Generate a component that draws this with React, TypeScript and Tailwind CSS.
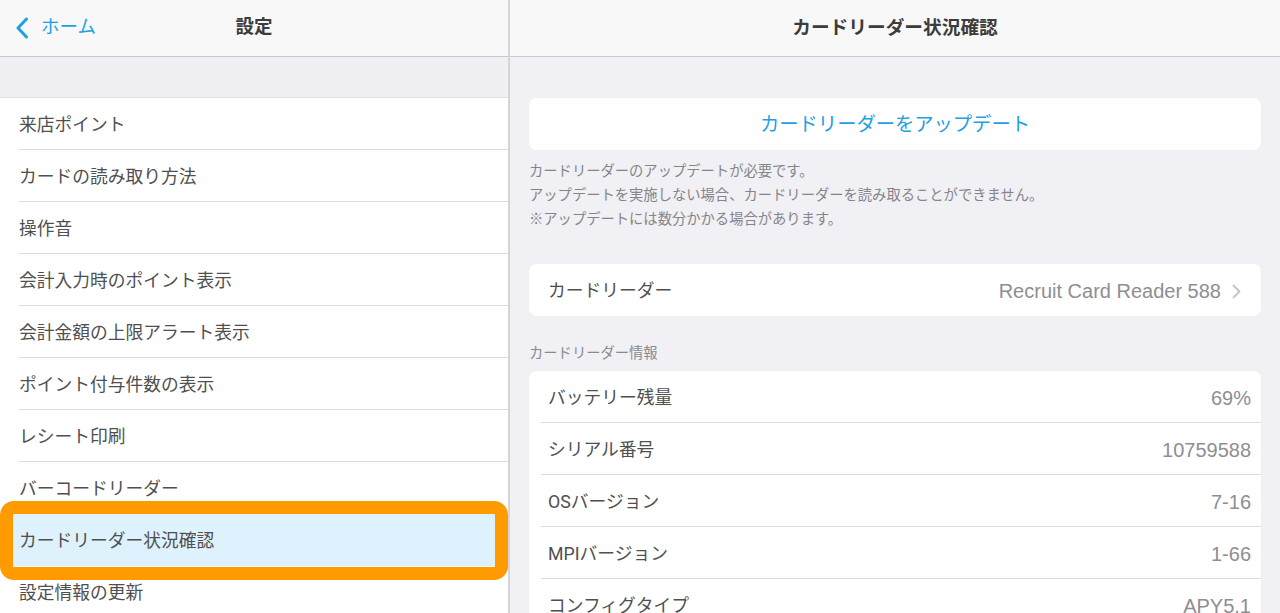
import React from 'react';

const FONT = { fontFamily: 'Roboto, "Noto Sans CJK JP", sans-serif' };
const LATIN = { fontFamily: '"Liberation Sans", "Noto Sans CJK JP", sans-serif' };

const menuItems = [
    '来店ポイント',
    'カードの読み取り方法',
    '操作音',
    '会計入力時のポイント表示',
    '会計金額の上限アラート表示',
    'ポイント付与件数の表示',
    'レシート印刷',
    'バーコードリーダー',
    'カードリーダー状況確認',
    '設定情報の更新',
];

const infoRows = [
    { label: 'バッテリー残量', value: '69%' },
    { label: 'シリアル番号', value: '10759588' },
    { label: 'OSバージョン', value: '7-16' },
    { label: 'MPIバージョン', value: '1-66' },
    { label: 'コンフィグタイプ', value: 'APY5.1' },
];

function BackChevron() {
    return (
        <svg width="14" height="22" viewBox="0 0 14 22" fill="none">
            <path d="M11.5 2 L3 11 L11.5 20" stroke="#1ea0e4" strokeWidth="3" strokeLinecap="round" strokeLinejoin="round" />
        </svg>
    );
}

function RowChevron() {
    return (
        <svg width="9" height="15" viewBox="0 0 9 15" fill="none">
            <path d="M1.5 1.5 L7.5 7.5 L1.5 13.5" stroke="#c4c4c9" strokeWidth="1.8" strokeLinecap="round" strokeLinejoin="round" />
        </svg>
    );
}

export default function App() {
    const selected = 'カードリーダー状況確認';

    return (
        <div className="flex h-[613px] w-[1280px] overflow-hidden bg-white text-[#4f4f4f]" style={FONT}>
            {/* Left: settings menu */}
            <div className="flex w-[510px] shrink-0 flex-col border-r-2 border-[#d4d4d9] bg-white">
                <div className="relative flex h-[57px] shrink-0 items-center justify-center border-b border-[#c8c7cc] bg-[#f8f8f8]">
                    <div className="absolute left-[15px] top-0 flex h-full items-center gap-[12px] pb-[1px]">
                        <BackChevron />
                        <span className="text-[18.5px] text-[#1ea0e4]">ホーム</span>
                    </div>
                    <span className="text-[18.5px] font-bold text-[#3c3c3c]">設定</span>
                </div>
                <div className="h-[41px] shrink-0 border-b border-[#e0e0e5] bg-[#efeff4]"></div>
                <div className="flex flex-col">
                    {menuItems.map(item => (
                        <div
                            key={item}
                            className={`relative h-[52px] shrink-0 pl-[19px] ${item === selected ? 'bg-[#ddf2fd]' : ''}`}
                        >
                            <div className="flex h-[51px] items-center pt-[3px] text-[17.75px]">{item}</div>
                            {item !== selected && <div className="h-px bg-[#dcdce0]"></div>}
                            {item === selected && (
                                <div className="pointer-events-none absolute -top-[13px] -bottom-[14px] left-0 right-0 rounded-[14px] border-[13px] border-[#ff9a00]"></div>
                            )}
                        </div>
                    ))}
                </div>
            </div>

            {/* Right: card reader status */}
            <div className="flex flex-1 flex-col bg-[#f0f0f5]">
                <div className="flex h-[57px] shrink-0 items-center justify-center border-b border-[#c8c7cc] bg-[#f8f8f8]">
                    <span className="text-[18.7px] font-bold text-[#3c3c3c]">カードリーダー状況確認</span>
                </div>
                <div className="flex flex-col px-[19px] pt-[41px]">
                    <div className="flex h-[52px] items-center justify-center rounded-[8px] bg-white pt-[3px] text-[19.3px] text-[#1ea0e4]">
                        カードリーダーをアップデート
                    </div>
                    <div className="mt-[9px] text-[14.3px] leading-[24px] text-[#858589]">
                        <p>カードリーダーのアップデートが必要です。</p>
                        <p>アップデートを実施しない場合、カードリーダーを読み取ることができません。</p>
                        <p>※アップデートには数分かかる場合があります。</p>
                    </div>
                    <div className="mt-[33px] flex h-[52px] items-center justify-between rounded-[8px] bg-white pl-[19px] pr-[20px] pt-[2px] text-[17.75px]">
                        <span>カードリーダー</span>
                        <span className="flex items-center gap-[11px] text-[20px] text-[#8e8e93]" style={LATIN}>
                            Recruit Card Reader 588
                            <RowChevron />
                        </span>
                    </div>
                    <div className="mt-[27px] h-[20px] text-[14.3px] leading-[20px] text-[#8a8a8e]">カードリーダー情報</div>
                    <div className="mt-[8px] flex flex-col rounded-t-[8px] bg-white pl-[12px]">
                        {infoRows.map(row => (
                            <div key={row.label} className="h-[52px] shrink-0">
                                <div className="flex h-[51px] items-center justify-between pl-[7px] pr-[10px] pt-[3px] text-[17.75px]">
                                    <span>{row.label}</span>
                                    <span className="text-[20px] text-[#8e8e93]" style={LATIN}>{row.value}</span>
                                </div>
                                <div className="h-px bg-[#dcdce0]"></div>
                            </div>
                        ))}
                    </div>
                </div>
            </div>
        </div>
    );
}
